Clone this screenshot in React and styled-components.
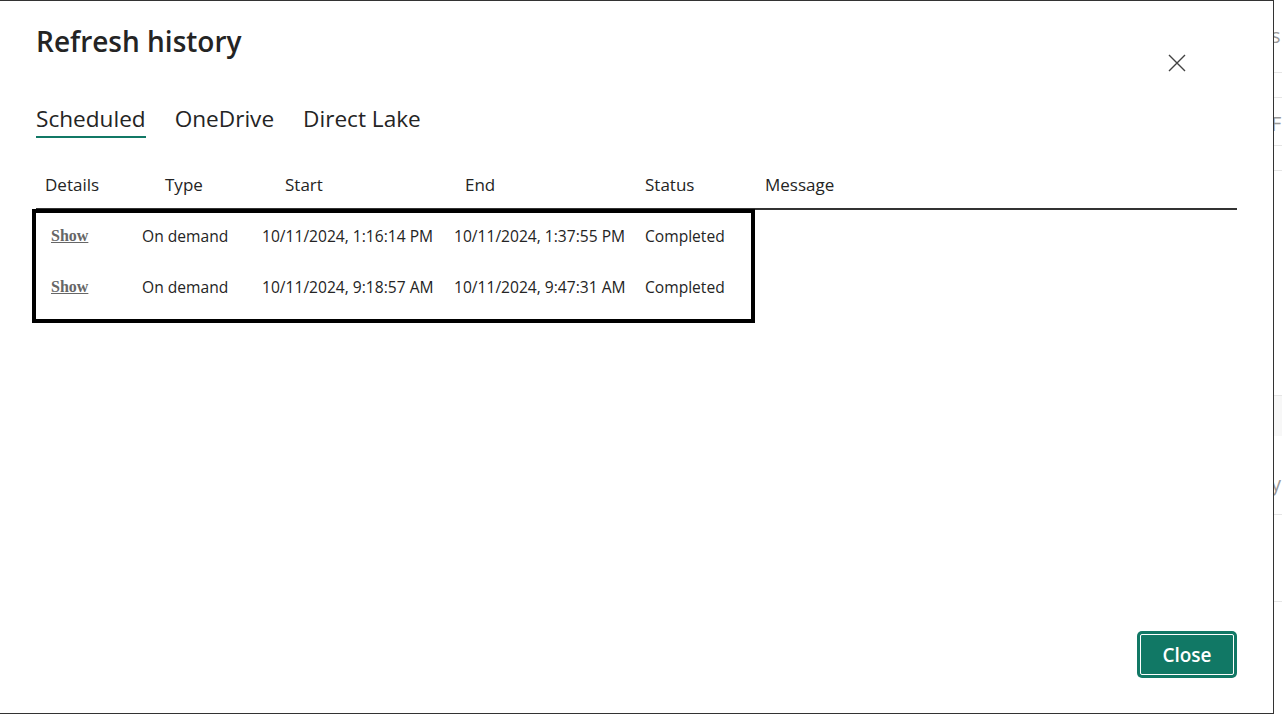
import React from "react";
import styled, { createGlobalStyle } from "styled-components";

const GlobalStyle = createGlobalStyle`
  html, body {
    margin: 0;
    padding: 0;
    background: #fff;
    overflow: hidden;
  }
  body {
    font-family: "Open Sans", "Noto Sans", sans-serif;
    color: #242424;
  }
`;

const runs = [
  {
    type: "On demand",
    start: "10/11/2024, 1:16:14 PM",
    end: "10/11/2024, 1:37:55 PM",
    status: "Completed",
  },
  {
    type: "On demand",
    start: "10/11/2024, 9:18:57 AM",
    end: "10/11/2024, 9:47:31 AM",
    status: "Completed",
  },
];

const tabs = ["Scheduled", "OneDrive", "Direct Lake"];
const columns = ["Details", "Type", "Start", "End", "Status", "Message"];

const App = () => {
  return (
    <>
      <GlobalStyle />
      <Screen>
        <Dialog>
          <TopRow>
            <Title>Refresh history</Title>
            <IconButton aria-label="Close">
              <svg width="20" height="20" viewBox="0 0 20 20">
                <path
                  d="M2 2 L18 18 M18 2 L2 18"
                  stroke="#424242"
                  strokeWidth="1.4"
                  fill="none"
                />
              </svg>
            </IconButton>
          </TopRow>

          <TabList>
            {tabs.map((t, i) => (
              <Tab key={t} active={i === 0}>
                {t}
              </Tab>
            ))}
          </TabList>

          <HeaderRow>
            {columns.map((c) => (
              <HeaderCell key={c}>{c}</HeaderCell>
            ))}
          </HeaderRow>

          <Highlight>
            {runs.map((r, i) => (
              <Row key={i}>
                <ShowLink href="#">Show</ShowLink>
                <Cell>{r.type}</Cell>
                <Cell>{r.start}</Cell>
                <Cell>{r.end}</Cell>
                <Cell>{r.status}</Cell>
              </Row>
            ))}
          </Highlight>

          <Footer>
            <PrimaryButton>Close</PrimaryButton>
          </Footer>
        </Dialog>

        <Backdrop>
          <BgText top={22}>s</BgText>
          <BgLine top={72} />
          <BgLine top={97} />
          <BgText top={110}>F</BgText>
          <BgLine top={145} />
          <BgLine top={170} />
          <BgBand top={395} />
          <BgText top={470}>y</BgText>
          <BgLine top={514} />
          <BgLine top={601} />
        </Backdrop>
      </Screen>
    </>
  );
};

const Screen = styled.div`
  display: flex;
  width: 1282px;
  height: 715px;
`;

const Dialog = styled.div`
  box-sizing: border-box;
  width: 1274px;
  height: 714px;
  border-top: 1px solid #333;
  border-right: 1px solid #333;
  border-bottom: 1px solid #333;
  padding: 20px 36px 35px 36px;
  display: flex;
  flex-direction: column;
  background: #fff;
`;

const TopRow = styled.div`
  display: flex;
  justify-content: space-between;
  align-items: flex-start;
`;

const Title = styled.h1`
  margin: 0;
  font-size: 28px;
  font-weight: 600;
  line-height: 40px;
  color: #242424;
`;

const IconButton = styled.button`
  border: none;
  background: none;
  padding: 0;
  margin: 32px 50px 0 0;
  width: 20px;
  height: 20px;
  display: flex;
`;

const TabList = styled.div`
  display: flex;
  gap: 29px;
  margin-top: 31px;
`;

const Tab = styled.div`
  font-size: 22.6px;
  line-height: 30px;
  color: #242424;
  padding-bottom: 2px;
  border-bottom: 2px solid ${(p) => (p.active ? "#117865" : "transparent")};
`;

const HeaderRow = styled.div`
  box-sizing: border-box;
  display: grid;
  grid-template-columns: 120px 120px 180px 180px 120px 1fr;
  padding: 0 0 6px 9px;
  margin-top: 29px;
  height: 43px;
  align-items: center;
  border-bottom: 2px solid #333;
`;

const HeaderCell = styled.div`
  font-size: 17px;
  color: #242424;
`;

const Highlight = styled.div`
  box-sizing: border-box;
  width: 723px;
  margin-left: -4px;
  margin-top: -1px;
  border: 4px solid #000;
  padding: 0 0 4px 0;
`;

const Row = styled.div`
  box-sizing: border-box;
  display: grid;
  grid-template-columns: 91px 120px 192px 191px 1fr;
  padding: 0 0 6px 15px;
  height: 51px;
  align-items: center;
`;

const ShowLink = styled.a`
  font-family: "Liberation Serif", "Times New Roman", serif;
  font-weight: 700;
  font-size: 16px;
  color: #666;
  text-decoration: underline;
`;

const Cell = styled.div`
  font-size: 15.6px;
  color: #242424;
  white-space: nowrap;
`;

const Footer = styled.div`
  margin-top: auto;
  display: flex;
  justify-content: flex-end;
`;

const PrimaryButton = styled.button`
  width: 100px;
  height: 47px;
  border: none;
  border-radius: 5px;
  background: #117865;
  color: #fff;
  font-family: "Open Sans", "Noto Sans", sans-serif;
  font-size: 19px;
  font-weight: 600;
  outline: 1px solid #fff;
  outline-offset: -4px;
`;

const Backdrop = styled.div`
  position: relative;
  flex: 1;
  height: 715px;
  background: #fff;
  overflow: hidden;
`;

const BgLine = styled.div`
  position: absolute;
  left: 0;
  right: 0;
  top: ${(p) => p.top}px;
  height: 1px;
  background: #e6e6e6;
`;

const BgBand = styled.div`
  position: absolute;
  left: 0;
  right: 0;
  top: ${(p) => p.top}px;
  height: 40px;
  background: #f7f7f7;
  border-top: 1px solid #e6e6e6;
`;

const BgText = styled.div`
  position: absolute;
  left: -3px;
  top: ${(p) => p.top}px;
  font-size: 20px;
  color: #999;
`;

export default App;
